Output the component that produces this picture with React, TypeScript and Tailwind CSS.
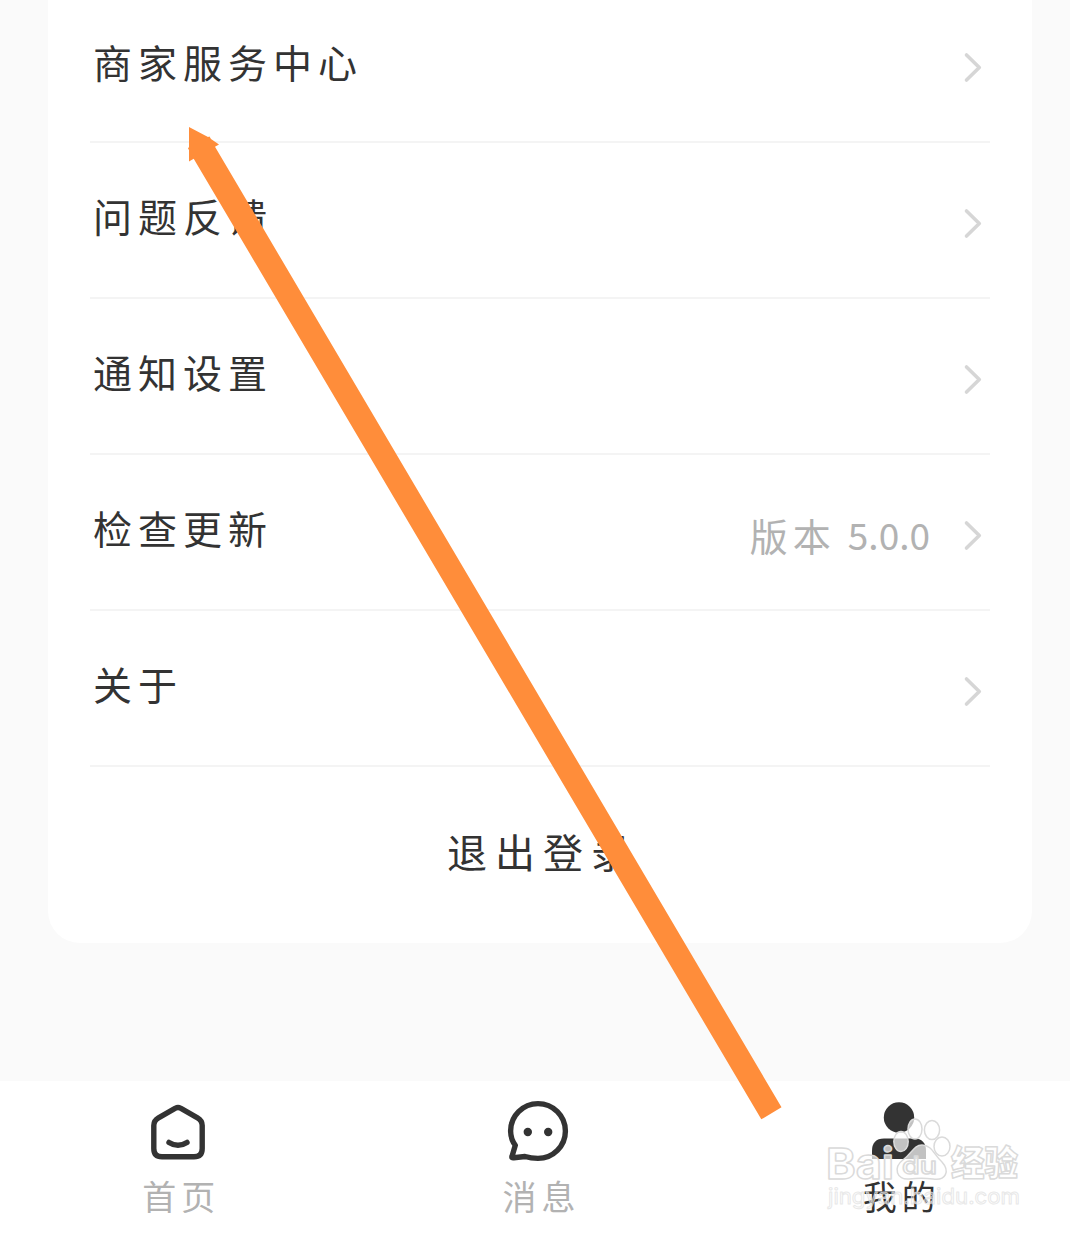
import { ReactNode } from 'react';

interface MenuItem {
  label: string;
  extra?: ReactNode;
}

const items: MenuItem[] = [
  { label: '商家服务中心' },
  { label: '问题反馈' },
  { label: '通知设置' },
  {
    label: '检查更新',
    extra: (
      <>
        <span className="tracking-[5px]">版本</span>
        <span className="ml-[12px] text-[37px]">5.0.0</span>
      </>
    ),
  },
  { label: '关于' },
];

function Chevron() {
  return (
    <svg width="20" height="32" viewBox="0 0 20 32" fill="none" stroke="#d6d6d6" strokeWidth="3.6" strokeLinecap="round" strokeLinejoin="round">
      <path d="M4.5 4 17.300 16.500 4.500 29" />
    </svg>
  );
}

function HomeIcon() {
  return (
    <svg width="64" height="64" viewBox="0 0 64 64" fill="none" stroke="#333333" strokeWidth="5.4" strokeLinecap="round" strokeLinejoin="round">
      <path d="M29.5 8.2Q32 6.6 34.5 8.2L51.5 17.8Q56.2 20.5 56.2 25.5V48.5Q56.2 56.8 48 56.8H16Q7.8 56.8 7.8 48.5V25.5Q7.8 20.5 12.5 17.8Z" />
      <path d="M23 42.4Q32 48.2 41 42.4" />
    </svg>
  );
}

function ChatIcon() {
  return (
    <svg width="64" height="64" viewBox="0 0 64 64" fill="none">
      <path
        d="M6 56.4Q5.4 58.2 7.8 57.8L19 56.5Q25 58.4 32 58.4A27.4 27.4 0 1 0 4.6 31Q4.6 39 9.3 45.3Z"
        stroke="#333333"
        strokeWidth="5.4"
        strokeLinejoin="round"
      />
      <circle cx="21.8" cy="32" r="4.2" fill="#333333" />
      <circle cx="42.2" cy="32" r="4.2" fill="#333333" />
    </svg>
  );
}

function UserIcon() {
  return (
    <svg width="64" height="64" viewBox="0 0 64 64" fill="#333333">
      <circle cx="32" cy="17.4" r="15.2" />
      <path d="M5 59V51Q5 38.5 17 38.5H47Q59 38.5 59 51V59Z" />
    </svg>
  );
}

const tabs = [
  { label: '首页', Icon: HomeIcon, active: false },
  { label: '消息', Icon: ChatIcon, active: false },
  { label: '我的', Icon: UserIcon, active: true },
];

function Watermark() {
  return (
    <svg
      className="absolute left-[820px] top-[1110px] overflow-visible"
      width="210"
      height="110"
      viewBox="0 0 210 110"
      fill="#ffffff"
      stroke="#dadada"
      strokeWidth="1.5"
      strokeLinejoin="round"
      fontFamily='Inter, "Noto Sans CJK SC", sans-serif'
    >
      <g fillOpacity="0.7">
        <ellipse cx="81" cy="31.5" rx="7.2" ry="10" />
        <ellipse cx="95" cy="19" rx="7" ry="10" />
        <ellipse cx="112" cy="20" rx="7.6" ry="9.6" />
        <ellipse cx="122" cy="36.5" rx="8" ry="9.6" />
        <path d="M102 35C94 35 92 43 84 49C72 58 77 70 89 69C98 68 105 68 113 69C126 71 130 61 122 52C114 45 112 35 102 35Z" />
      </g>
      <text x="6" y="69" fontSize="43" fontWeight="700" fillOpacity="0.7" textLength="68" lengthAdjust="spacingAndGlyphs">Bai</text>
      <text x="82" y="64" fontSize="24" fontWeight="500" fillOpacity="0.6" textLength="35" lengthAdjust="spacingAndGlyphs">du</text>
      <text x="131" y="66" fontSize="35" fontWeight="900" textLength="67" lengthAdjust="spacingAndGlyphs" fontFamily='"Noto Sans CJK SC", sans-serif'>经验</text>
      <text x="8" y="94" fontSize="22" fontWeight="400" fillOpacity="0.35" strokeWidth="1" stroke="#e2e2e2" strokeOpacity="0.8" textLength="192" lengthAdjust="spacingAndGlyphs">jingyan.baidu.com</text>
    </svg>
  );
}

export default function App() {
  return (
    <div className="relative h-[1234px] w-[1079px] overflow-hidden bg-white font-['Noto_Sans_CJK_SC',sans-serif] text-[#333333]">
      <main className="h-[1081px] w-[1070px] bg-[#fafafa] pl-12">
        <section className="h-[943px] w-[984px] rounded-b-[32px] bg-white px-[42px]">
          {items.map((item, i) => (
            <div
              key={item.label}
              className={`flex items-center justify-between border-b-2 border-[#f4f4f4] pr-2 pl-[3px] ${i === 0 ? 'h-[143px]' : 'h-[156px]'}`}
            >
              <span className={`text-[39px] leading-none tracking-[6px] ${i === 0 ? '-mt-[18px]' : '-mt-[9px]'}`}>{item.label}</span>
              <div className={`flex items-center ${i === 0 ? '-mt-2' : 'mt-[5px]'}`}>
                {item.extra && (
                  <span className="mr-[32px] flex items-center text-[38px] leading-none text-[#b2b2b2]">{item.extra}</span>
                )}
                <Chevron />
              </div>
            </div>
          ))}
          <button className="flex h-[176px] w-full items-center justify-center pb-[8px] pl-[6px] text-[40px] leading-none tracking-[8px]">
            退出登录
          </button>
        </section>
      </main>

      <nav className="-ml-[2px] grid h-[153px] w-[1081px] grid-cols-3 bg-white">
        {tabs.map(({ label, Icon, active }) => (
          <div key={label} className="flex flex-col items-center pt-[19px]">
            <Icon />
            <span className={`mt-[15px] pl-[6px] text-[34px] leading-none tracking-[5px] ${active ? 'text-[#333333]' : 'text-[#b2b2b2]'}`}>
              {label}
            </span>
          </div>
        ))}
      </nav>

      <Watermark />

      {/* Pointer arrow */}
      <svg className="pointer-events-none absolute inset-0" width="1079" height="1234" viewBox="0 0 1079 1234">
        <path
          d="M189 127 208 137 209.500 136.500 211 139 219 144.500 215 146.700 781.500 1107.200 761.300 1119.300 193.700 158.700 189 161.500 189 150 188 148.500 189 147Z"
          fill="#ff8d3a"
        />
      </svg>
    </div>
  );
}
